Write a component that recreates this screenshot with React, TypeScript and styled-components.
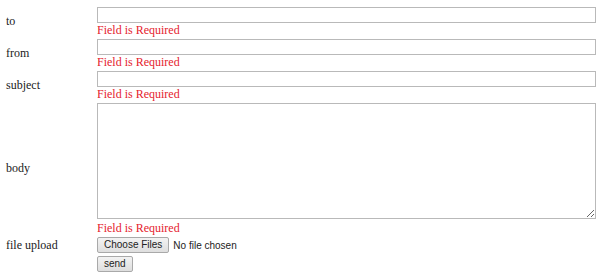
import React from "react";
import styled, { createGlobalStyle } from "styled-components";

const Global = createGlobalStyle`
  html, body { margin: 0; padding: 0; background: #fff; }
  body { font-family: "Liberation Serif", "Times New Roman", serif; color: #222; }
`;

const Form = styled.form`
  display: grid;
  grid-template-columns: 91px 499px;
  padding: 7px 0 0 6px;
  row-gap: 3px;
`;

const Label = styled.label`
  font-size: 12px;
  align-self: center;
  color: #1a1a1a;
`;

const Field = styled.div`
  display: flex;
  flex-direction: column;
`;

const TextInput = styled.input`
  box-sizing: border-box;
  width: 100%;
  height: 16px;
  margin: 0;
  border: 1px solid #b9b9b9;
  padding: 0 2px;
  font-size: 11px;
  outline: none;
`;

const TextArea = styled.textarea`
  box-sizing: border-box;
  width: 100%;
  height: 116px;
  margin: 0;
  border: 1px solid #b9b9b9;
  padding: 2px;
  font-size: 11px;
  outline: none;
  display: block;
`;

const Error = styled.span`
  color: #e5222e;
  font-size: 12px;
  line-height: 12px;
  margin-top: 1px;
`;

const GapError = styled(Error)`
  margin-top: 3px;
`;

const FileRow = styled.div`
  display: flex;
  align-items: center;
  gap: 4px;
  font-family: "Liberation Sans", Arial, sans-serif;
  font-size: 10px;
  color: #222;
`;

const Btn = styled.button`
  font-family: "Liberation Sans", Arial, sans-serif;
  font-size: 10px;
  color: #222;
  height: 16px;
  padding: 0 6px;
  margin: 0;
  border: 1px solid #a9a9a9;
  border-radius: 2px;
  background: linear-gradient(#f3f3f3, #dedede);
  line-height: 14px;
  cursor: pointer;
`;

const Empty = styled.div``;

const SendWrap = styled.div`
  display: flex;
`;

export default function App() {
  return (
    <>
      <Global />
      <Form onSubmit={(e) => e.preventDefault()}>
        <Label>to</Label>
        <Field>
          <TextInput type="text" />
          <Error>Field is Required</Error>
        </Field>
        <Label>from</Label>
        <Field>
          <TextInput type="text" />
          <Error>Field is Required</Error>
        </Field>
        <Label>subject</Label>
        <Field>
          <TextInput type="text" />
          <Error>Field is Required</Error>
        </Field>
        <Label>body</Label>
        <Field>
          <TextArea />
          <GapError>Field is Required</GapError>
        </Field>
        <Label>file upload</Label>
        <FileRow>
          <Btn type="button">Choose Files</Btn>
          <span>No file chosen</span>
        </FileRow>
        <Empty />
        <SendWrap>
          <Btn type="submit">send</Btn>
        </SendWrap>
      </Form>
    </>
  );
}
